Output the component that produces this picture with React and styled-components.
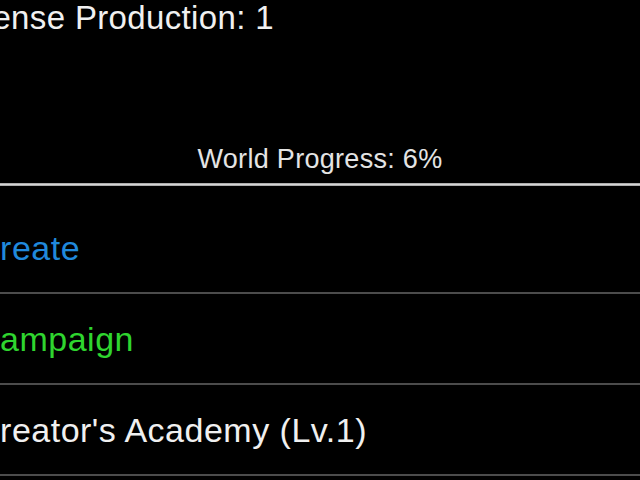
import React from "react";
import styled, { createGlobalStyle } from "styled-components";

const GlobalStyle = createGlobalStyle`
  html, body {
    margin: 0;
    padding: 0;
    background: #000;
  }
  body {
    font-family: "Liberation Sans", Arial, Helvetica, sans-serif;
    -webkit-font-smoothing: antialiased;
  }
`;

const Screen = styled.div`
  width: 640px;
  height: 480px;
  overflow: hidden;
  background: #000;
  color: #f2f2f2;
  display: flex;
  flex-direction: column;
`;

/* stat line at the top; the view is scrolled a little to the right */
const StatLine = styled.div`
  font-size: 33px;
  line-height: 36px;
  letter-spacing: 0.35px;
  color: #f0f0f0;
  white-space: nowrap;
  text-indent: -60px;
`;

const ProgressCaption = styled.div`
  margin-top: 107px;
  font-size: 27px;
  line-height: 32px;
  letter-spacing: 0.3px;
  color: #e4e4e4;
  text-align: center;
  white-space: nowrap;
`;

const SectionRule = styled.div`
  margin-top: 8px;
  height: 3px;
  background: linear-gradient(#9a9a9a, #d4d4d4 50%, #9a9a9a);
`;

const Menu = styled.nav`
  margin-top: 17px;
  display: flex;
  flex-direction: column;
`;

const MenuRow = styled.div`
  height: 89px;
  display: flex;
  align-items: center;
  border-bottom: 2px solid #4c4c4c;
  font-size: 34px;
  line-height: 40px;
  letter-spacing: 0.5px;
  white-space: nowrap;
  text-indent: -25px;
  color: ${(p) => p.$tone};
`;

const tones = {
  blue: "#2089dc",
  green: "#2fd52f",
  plain: "#f0f0f0",
};

const items = [
  { label: "Create", tone: tones.blue },
  { label: "Campaign", tone: tones.green },
  { label: "Creator's Academy (Lv.1)", tone: tones.plain },
];

export default function App() {
  return (
    <>
      <GlobalStyle />
      <Screen>
        <StatLine>Defense Production: 1</StatLine>
        <ProgressCaption>World Progress: 6%</ProgressCaption>
        <SectionRule />
        <Menu>
          {items.map((it) => (
            <MenuRow key={it.label} $tone={it.tone}>
              {it.label}
            </MenuRow>
          ))}
        </Menu>
      </Screen>
    </>
  );
}
